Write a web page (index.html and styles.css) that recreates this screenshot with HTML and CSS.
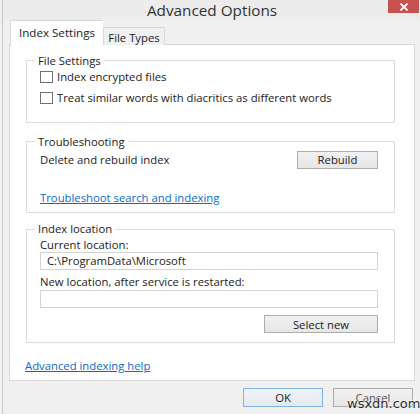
FILE: index.html
```html
<!DOCTYPE html>
<html>
<head>
<meta charset="utf-8">
<link rel="stylesheet" href="styles.css">
</head>
<body>
<div class="window">
  <div class="titlebar">
    <span class="title">Advanced Options</span>
    <span class="close"><svg width="10" height="8" viewBox="0 0 10 8"><path d="M1.5 0.5 L8.5 7.5 M8.5 0.5 L1.5 7.5" stroke="#fff" stroke-width="1.8" fill="none"/></svg></span>
  </div>
  <div class="content">
    <div class="tabs">
      <div class="tab active">Index Settings</div>
      <div class="tab">File Types</div>
    </div>
    <div class="panel">
      <div class="group g1">
        <div class="legend">File Settings</div>
        <label class="check"><span class="box"></span>Index encrypted files</label>
        <label class="check"><span class="box"></span>Treat similar words with diacritics as different words</label>
      </div>
      <div class="group g2">
        <div class="legend">Troubleshooting</div>
        <div class="row">
          <span>Delete and rebuild index</span>
          <span class="btn rebuild">Rebuild</span>
        </div>
        <a class="link trouble">Troubleshoot search and indexing</a>
      </div>
      <div class="group g3">
        <div class="legend">Index location</div>
        <div class="lbl">Current location:</div>
        <div class="input">C:\ProgramData\Microsoft</div>
        <div class="lbl lbl2">New location, after service is restarted:</div>
        <div class="input input2"></div>
        <div class="btnrow"><span class="btn selnew">Select new</span></div>
      </div>
      <a class="link help">Advanced indexing help</a>
    </div>
    <div class="footer">
      <span class="btn ok">OK</span>
      <span class="btn cancel">Cancel</span>
    </div>
  </div>
  <div class="watermark">wsxdn.com</div>
</div>
</body>
</html>
```
FILE: styles.css
```css
html, body {
  margin: 0;
  padding: 0;
  background: #f0f0f0;
}
body {
  width: 420px;
  height: 414px;
  overflow: hidden;
  font-family: "Open Sans", "Noto Sans", "Liberation Sans", sans-serif;
  font-size: 11.3px;
  color: #1a1a1a;
}
.window {
  position: relative;
  width: 417px;
  height: 414px;
  margin-left: 2px;
  border-left: 1px solid #c9c9c9;
  background: #f0f0f0;
  box-sizing: border-box;
}
.titlebar {
  position: relative;
  height: 19px;
  padding-top: 1px;
  display: flex;
  justify-content: center;
  align-items: flex-start;
  background: #ececec;
}
.title {
  font-size: 15.3px;
  line-height: 19px;
  color: #333;
  margin-left: 2px;
}
.close {
  position: absolute;
  top: 0;
  right: 0;
  width: 31px;
  height: 13px;
  background: #c75050;
  display: flex;
  align-items: center;
  justify-content: center;
}
.content {
  padding: 0 4px 0 6px;
}
.tabs {
  display: flex;
  align-items: flex-end;
  height: 25px;
  padding-left: 1px;
  position: relative;
  z-index: 1;
  margin-bottom: -1px;
}
.tab {
  box-sizing: border-box;
  height: 18px;
  width: 62px;
  border: 1px solid #d9d9d9;
  border-bottom: none;
  background: #f0f0f0;
  display: flex;
  align-items: center;
  justify-content: center;
  padding-top: 1px;
}
.tab.active {
  height: 26px;
  width: 93px;
  background: #fff;
  border-right: none;
  margin-bottom: -1px;
  align-items: flex-start;
  padding-top: 4px;
  font-size: 11.6px;
}
.panel {
  box-sizing: border-box;
  height: 337px;
  background: #fff;
  border: 1px solid #d9d9d9;
  padding-top: 15px;
}
.group {
  border: 1px solid #dcdcdc;
  margin: 0 19px 0 16px;
  padding: 0 16px 0 13px;
}
.legend {
  width: max-content;
  line-height: 16px;
  height: 16px;
  margin: -8px 0 0 -5px;
  padding: 0 3px;
  background: #fff;
}
.g1 .legend { margin-bottom: -3px; }
.g1 { padding-bottom: 14px; }
.check {
  display: flex;
  align-items: center;
  height: 21px;
}
.box {
  box-sizing: border-box;
  width: 13px;
  height: 12px;
  border: 1px solid #707070;
  background: #fff;
  margin-right: 4px;
}
.g2 {
  margin-top: 18px;
  padding-bottom: 6px;
}
.row {
  display: flex;
  justify-content: space-between;
  align-items: center;
  height: 19px;
}
.btn {
  box-sizing: border-box;
  display: flex;
  align-items: center;
  justify-content: center;
  height: 18px;
  background: linear-gradient(#f1f1f1, #e6e6e6);
  border: 1px solid #adadad;
  color: #1a1a1a;
}
.rebuild {
  width: 81px;
}
.link {
  display: block;
  width: max-content;
  line-height: 16px;
  color: #0a6ac9;
  text-decoration: underline;
}
.trouble {
  margin-top: 21px;
}
.g3 {
  margin-top: 16px;
  padding-bottom: 9px;
}
.g3 .legend {
  margin-top: -9px;
}
.lbl {
  line-height: 14px;
  margin-top: 1px;
}
.lbl2 {
  margin-top: 5px;
}
.input {
  box-sizing: border-box;
  height: 18px;
  border: 1px solid #d3d3d3;
  background: #fff;
  padding-left: 6px;
  line-height: 16px;
}
.input2 {
  margin-top: 1px;
}
.btnrow {
  display: flex;
  justify-content: flex-end;
  margin-top: 7px;
}
.selnew {
  width: 114px;
}
.help {
  margin: 15px 0 0 15px;
}
.footer {
  display: flex;
  justify-content: flex-end;
  gap: 10px;
  padding: 7px 2px 0 0;
}
.ok {
  width: 80px;
  height: 19px;
  border-color: #7eb4ea;
  background: linear-gradient(#f0f3f6, #e5e9ee);
}
.cancel {
  width: 80px;
  height: 19px;
  color: #555;
}
.watermark {
  position: absolute;
  left: 344px;
  top: 396px;
  font-family: "DejaVu Sans", sans-serif;
  font-size: 13px;
  color: #2b2b2b;
  text-shadow: 0 0 2px #fff, 0 0 2px #fff;
}
```
